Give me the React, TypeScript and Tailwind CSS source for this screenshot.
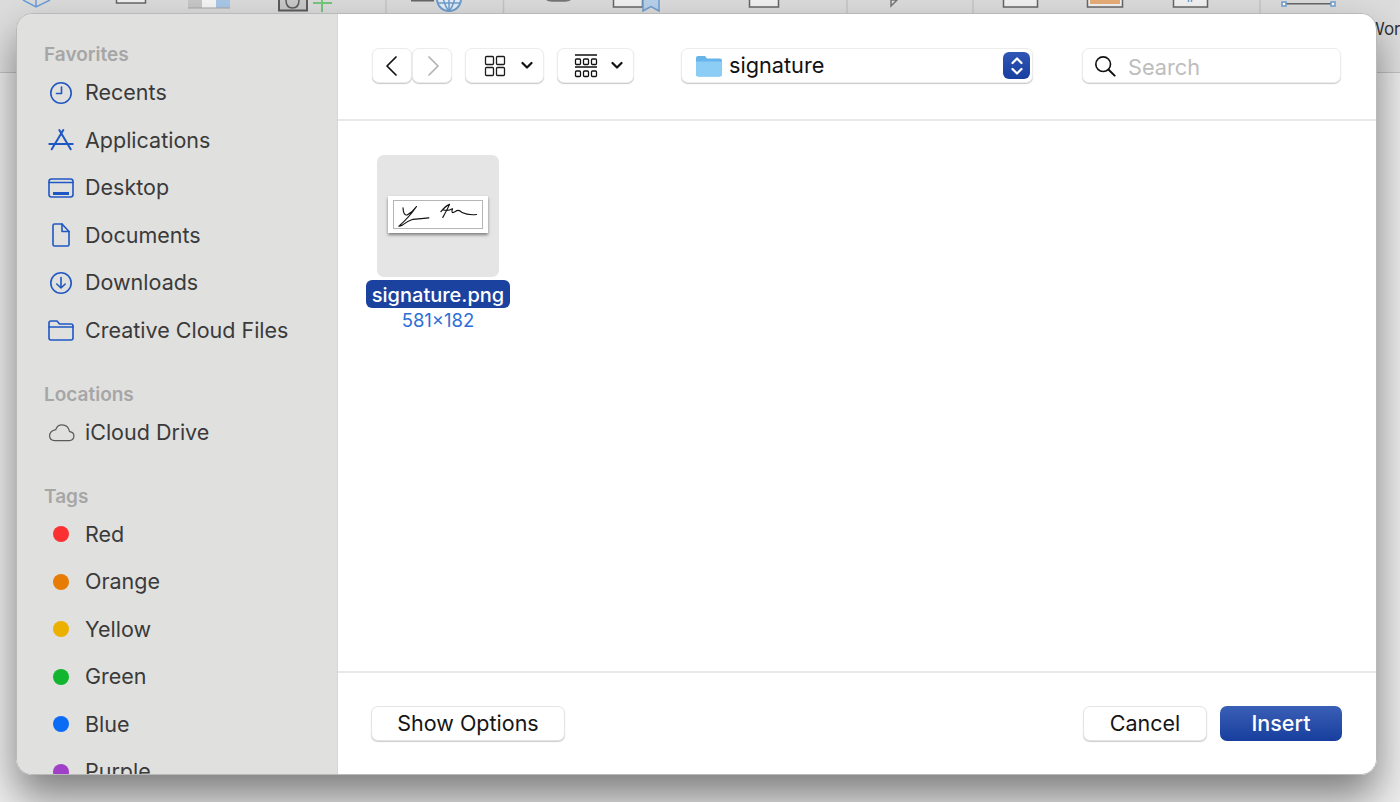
import type { ReactNode } from "react";

const font = { fontFamily: "Inter, 'Liberation Sans', sans-serif" };

function Row({ icon, label }: { icon: ReactNode; label: string }) {
  return (
    <div className="flex h-[47.5px] items-center">
      <div className="flex w-[41px] shrink-0 justify-start pl-[4px]">{icon}</div>
      <span className="text-[21.5px] leading-none text-[#3a3a3a]">{label}</span>
    </div>
  );
}

function Heading({ children }: { children: string }) {
  return <div className="text-[19px] font-semibold leading-[22px] text-[#a6a6a6]">{children}</div>;
}

function Ico({ children }: { children: ReactNode }) {
  return (
    <svg width="26" height="26" viewBox="0 0 26 26" fill="none" stroke="#1f57c3" strokeWidth="1.6" strokeLinecap="round" strokeLinejoin="round">
      {children}
    </svg>
  );
}

function Dot({ color }: { color: string }) {
  return (
    <div className="flex w-[26px] justify-center">
      <div className={`h-4 w-4 rounded-full ${color}`} />
    </div>
  );
}

function Backdrop() {
  return (
    <div className="h-[73px] border-b border-[#c4c4c4] bg-gradient-to-b from-[#dcdcdc] to-[#e2e2e2]">
      <svg width="1400" height="72" viewBox="0 0 1400 72" fill="none" strokeWidth="1.5">
        <path d="M23 0 L36 7 L50 0 M36 0 V7" stroke="#6a9fd8" />
        <rect x="116.5" y="-4" width="29" height="7" fill="#f2f2f2" stroke="#666" />
        <rect x="188" y="-2" width="14" height="10" fill="#c8c8c8" />
        <rect x="202" y="-2" width="14" height="10" fill="#f6f6f6" />
        <rect x="216" y="-2" width="14" height="10" fill="#a9c8e8" />
        <path d="M188 8 H230" stroke="#a8a8a8" strokeWidth="1" />
        <rect x="279" y="-4" width="28" height="14.5" fill="#c9c9c9" stroke="#5c5c5c" strokeWidth="2" />
        <path d="M286 0 Q286 8 292.5 8 Q299 8 299 0" stroke="#5c5c5c" />
        <path d="M322 0 V12 M313 3 H332" stroke="#76c77c" strokeWidth="2" />
        <path d="M386 0 V72" stroke="#c6c6c6" />
        <path d="M411 0.5 H434" stroke="#666" strokeWidth="2" />
        <circle cx="449" cy="-1" r="12" fill="#e6eef7" stroke="#6f9fcf" strokeWidth="2" />
        <path d="M438 3 H460 M449 -10 V11 M442 -8 Q444 6 449 11 Q454 6 456 -8" stroke="#6f9fcf" />
        <path d="M503.5 0 V72" stroke="#c6c6c6" />
        <path d="M546 0 Q548 1.8 552 1.8 H565 Q569 1.8 571 0 Z" fill="#777" />
        <rect x="613.5" y="-4" width="29" height="11" fill="#f2f2f2" stroke="#666" />
        <path d="M643 -2 V11 L651 6.5 L659 11 V-2 Z" fill="#b8d2ec" stroke="#6f9fcf" />
        <rect x="749.5" y="-4" width="29" height="11" fill="#f2f2f2" stroke="#666" />
        <path d="M847 0 V72" stroke="#c6c6c6" />
        <path d="M891 0 V6 L897 0 Z" fill="#e6e6e6" stroke="#777" />
        <path d="M973 0 V72" stroke="#c6c6c6" />
        <rect x="1003.5" y="-4" width="34" height="11" fill="#f2f2f2" stroke="#666" />
        <rect x="1087.5" y="-4" width="35" height="11" fill="#f2f2f2" stroke="#666" />
        <rect x="1090" y="0" width="30" height="4" fill="#e8ad78" />
        <rect x="1173.5" y="-4" width="34" height="11" fill="#f2f2f2" stroke="#666" />
        <path d="M1188.5 0 V2 M1191.5 0 V2" stroke="#6f9fcf" />
        <path d="M1260 0 V72" stroke="#c6c6c6" />
        <path d="M1285 3.7 H1333" stroke="#666" />
        <rect x="1282" y="2" width="4" height="4" fill="#fff" stroke="#6f9fcf" />
        <rect x="1331" y="2" width="4" height="4" fill="#fff" stroke="#6f9fcf" />
      </svg>
    </div>
  );
}

export default function App() {
  return (
    <div style={font} className="relative h-[802px] w-[1400px] overflow-hidden bg-[#efefef]">
      <Backdrop />
      <span className="absolute left-[1368px] top-[19px] text-[17px] leading-5 text-[#333]">Wor</span>

      <div className="absolute left-[16px] top-[13px] flex h-[762px] w-[1361px] overflow-hidden rounded-[16px] border border-[#b9b9b9] shadow-[0_22px_42px_rgba(0,0,0,0.48)]">
        <aside className="w-[321px] shrink-0 overflow-hidden border-r border-[#d6d6d6] bg-[#e0e0df] pl-[27px] pt-[30px]">
          <Heading>Favorites</Heading>
          <div className="mt-[3px]">
            <Row
              label="Recents"
              icon={
                <Ico>
                  <circle cx="13" cy="13" r="10.2" />
                  <path d="M13.5 7 V13.5 H8.5" />
                </Ico>
              }
            />
            <Row
              label="Applications"
              icon={
                <Ico>
                  <path d="M11.3 3 L22.7 22.3 M15.3 3 L3.7 22.3 M1.3 17 H24.7" strokeWidth="2" />
                </Ico>
              }
            />
            <Row
              label="Desktop"
              icon={
                <Ico>
                  <rect x="1" y="4" width="24" height="18" rx="2.5" />
                  <path d="M1 7.5 H25" />
                  <path d="M5 18.5 H21" strokeWidth="3" strokeLinecap="butt" />
                </Ico>
              }
            />
            <Row
              label="Documents"
              icon={
                <Ico>
                  <path d="M5 3.5 Q5 2 6.5 2 H14 L21 9.5 V22.5 Q21 24 19.5 24 H6.5 Q5 24 5 22.5 Z" />
                  <path d="M14 2 V9.5 H21" />
                </Ico>
              }
            />
            <Row
              label="Downloads"
              icon={
                <Ico>
                  <circle cx="13" cy="13" r="10.2" />
                  <path d="M13 7.5 V18 M8.8 14 L13 18 L17.2 14" />
                </Ico>
              }
            />
            <Row
              label="Creative Cloud Files"
              icon={
                <Ico>
                  <path d="M1 21 V6 Q1 4 3 4 H9 L11.5 7 H23 Q25 7 25 9 V21 Q25 23 23 23 H3 Q1 23 1 21 Z" />
                  <path d="M1 10 H25" />
                </Ico>
              }
            />
          </div>

          <div className="mt-[29.5px]">
            <Heading>Locations</Heading>
          </div>
          <div className="mt-[3px]">
            <Row
              label="iCloud Drive"
              icon={
                <svg width="27" height="21" viewBox="0 0 28 22" fill="none" stroke="#5b5b5b" strokeWidth="1.3">
                  <path d="M7 19.5 H22 Q27 19.5 27 14.5 Q27 10.5 22.5 10 Q21 3 14.5 3 Q9.5 3 8 8 Q1.5 9.5 1.5 14.5 Q1.5 19.5 7 19.5 Z" />
                </svg>
              }
            />
          </div>

          <div className="mt-[29.5px]">
            <Heading>Tags</Heading>
          </div>
          <div className="mt-[3px]">
            <Row label="Red" icon={<Dot color="bg-[#fb3030]" />} />
            <Row label="Orange" icon={<Dot color="bg-[#e67c06]" />} />
            <Row label="Yellow" icon={<Dot color="bg-[#ecb000]" />} />
            <Row label="Green" icon={<Dot color="bg-[#12b52e]" />} />
            <Row label="Blue" icon={<Dot color="bg-[#0a6cf5]" />} />
            <Row label="Purple" icon={<Dot color="bg-[#a040c8]" />} />
          </div>
        </aside>

        <main className="flex min-w-0 flex-1 flex-col bg-white">
          <header className="flex h-[107px] shrink-0 items-start border-b-2 border-[#e8e8e8] pl-[34px] pr-[35px] pt-[34px]">
            <ToolButton className="w-[40px] justify-center">
              <svg width="16" height="24" viewBox="0 0 16 24" fill="none" stroke="#111" strokeWidth="1.7" strokeLinecap="round" strokeLinejoin="round">
                <path d="M12 3 L3 12 L12 21" />
              </svg>
            </ToolButton>
            <ToolButton className="w-[40px] justify-center">
              <svg width="16" height="24" viewBox="0 0 16 24" fill="none" stroke="#b3b3b3" strokeWidth="1.7" strokeLinecap="round" strokeLinejoin="round">
                <path d="M5 3 L14 12 L5 21" />
              </svg>
            </ToolButton>
            <ToolButton className="ml-[13px] w-[79px] gap-[15px] pl-[18px]">
              <svg width="22" height="22" viewBox="0 0 22 22" fill="none" stroke="#1c1c1c" strokeWidth="1.3">
                <rect x="1.5" y="1.5" width="8" height="8" rx="1" />
                <rect x="12.5" y="1.5" width="8" height="8" rx="1" />
                <rect x="1.5" y="12.5" width="8" height="8" rx="1" />
                <rect x="12.5" y="12.5" width="8" height="8" rx="1" />
              </svg>
              <Chevron />
            </ToolButton>
            <ToolButton className="ml-[13px] w-[77px] gap-[13px] pl-[16px]">
              <svg width="24" height="24" viewBox="0 0 24 24" fill="none" stroke="#111" strokeWidth="1.3">
                <path d="M1 1 H23 M1 13 H23" />
                <rect x="1.5" y="5" width="5" height="5.5" rx="1" />
                <rect x="9.5" y="5" width="5" height="5.5" rx="1" />
                <rect x="17.5" y="5" width="5" height="5.5" rx="1" />
                <rect x="1.5" y="17" width="5" height="5.5" rx="1" />
                <rect x="9.5" y="17" width="5" height="5.5" rx="1" />
                <rect x="17.5" y="17" width="5" height="5.5" rx="1" />
              </svg>
              <Chevron />
            </ToolButton>

            <ToolButton className="ml-[47px] w-[352px] pl-[14px] pr-[2px]">
              <svg width="26" height="22" viewBox="0 0 26 22">
                <path d="M0 3 Q0 1 2 1 H9 L11 3.5 H24 Q26 3.5 26 5.5 V19 Q26 21.5 23.5 21.5 H2.5 Q0 21.5 0 19 Z" fill="#67b4ea" />
                <path d="M0 6.5 H26 V19 Q26 21.5 23.5 21.5 H2.5 Q0 21.5 0 19 Z" fill="#8ccdf5" />
              </svg>
              <span className="ml-[7px] text-[21.7px] leading-none text-[#111]">signature</span>
              <div className="ml-auto flex h-[27px] w-[27px] items-center justify-center rounded-[6px] bg-gradient-to-b from-[#2f55b5] to-[#183f9f]">
                <svg width="16" height="24" viewBox="0 0 16 24" fill="none" stroke="#fff" strokeWidth="2.2" strokeLinecap="round" strokeLinejoin="round">
                  <path d="M3.5 9 L8 4.5 L12.5 9 M3.5 15 L8 19.5 L12.5 15" />
                </svg>
              </div>
            </ToolButton>

            <div className="ml-auto flex h-[35px] w-[259px] items-center rounded-[7px] border border-[#ececec] bg-white pl-[11px] shadow-[0_1px_1px_rgba(0,0,0,0.2)]">
              <svg width="22" height="22" viewBox="0 0 24 24" fill="none" stroke="#111" strokeWidth="1.8" strokeLinecap="round">
                <circle cx="10" cy="10" r="8" />
                <path d="M16 16 L22.5 22.5" strokeWidth="2.2" />
              </svg>
              <span className="ml-[12px] pt-[4px] text-[21.7px] leading-none text-[#bdbdbd]">Search</span>
            </div>
          </header>

          <section className="flex-1 pl-[28px] pt-[34px]">
            <div className="flex w-[144px] flex-col items-center">
              <div className="flex h-[122px] w-[122px] items-center justify-center rounded-[7px] bg-[#e5e5e5]">
                <div className="mb-[3px] flex h-[37px] w-[100px] flex-col bg-white px-[5px] py-[4px] shadow-[0_2px_3px_rgba(0,0,0,0.45)]">
                  <div className="flex-1 border border-[#b5b5b5]">
                    <svg width="88" height="27" viewBox="0 0 90 28" fill="none" stroke="#111" strokeWidth="1.2" strokeLinecap="round" strokeLinejoin="round">
                      <path d="M8.7 7 Q9 15 13 14.5 Q18 12 22.7 5.7 Q15 17 5 25.5 Q3 27 8 25 Q13 21 19 19 Q28 18.5 35.5 17.5" />
                      <path d="M48 11 Q53 5 57 3.5 Q55 8 50 17 M50 9 Q55 11 60 8 Q58 14 63 11 Q66 8 70 12 Q76 15 85 14" />
                    </svg>
                  </div>
                </div>
              </div>
              <div className="mt-[3px] flex h-[28px] w-[144px] items-center justify-center rounded-[6px] bg-[#1c429f] pt-[1px] text-[20px] font-medium leading-none text-white">
                signature.png
              </div>
              <div className="mt-[2px] text-[18.5px] leading-5 text-[#2d6fd6]">581×182</div>
            </div>
          </section>

          <footer className="flex h-[103px] shrink-0 items-start border-t-2 border-[#e8e8e8] pl-[33px] pr-[34px] pt-[33px]">
            <FooterButton className="w-[194px]">Show Options</FooterButton>
            <FooterButton className="ml-auto w-[124px]">Cancel</FooterButton>
            <button className="ml-[13px] flex h-[35px] w-[122px] items-center justify-center rounded-[7px] bg-gradient-to-b from-[#3a5fb6] to-[#173e9e] text-[21.5px] font-medium leading-none text-white">
              Insert
            </button>
          </footer>
        </main>
      </div>
    </div>
  );
}

function Chevron() {
  return (
    <svg width="12" height="9" viewBox="0 0 12 9" fill="none" stroke="#111" strokeWidth="2.2" strokeLinecap="round" strokeLinejoin="round">
      <path d="M1.5 2 L6 6.5 L10.5 2" />
    </svg>
  );
}

function ToolButton({ className, children }: { className: string; children: ReactNode }) {
  return (
    <div className={`flex h-[35px] items-center rounded-[7px] border border-[#ececec] bg-white shadow-[0_1px_1px_rgba(0,0,0,0.22)] ${className}`}>
      {children}
    </div>
  );
}

function FooterButton({ className, children }: { className: string; children: string }) {
  return (
    <button className={`flex h-[35px] items-center justify-center rounded-[7px] border border-[#e4e4e4] bg-white text-[21.5px] leading-none text-[#151515] shadow-[0_1px_1px_rgba(0,0,0,0.2)] ${className}`}>
      {children}
    </button>
  );
}
